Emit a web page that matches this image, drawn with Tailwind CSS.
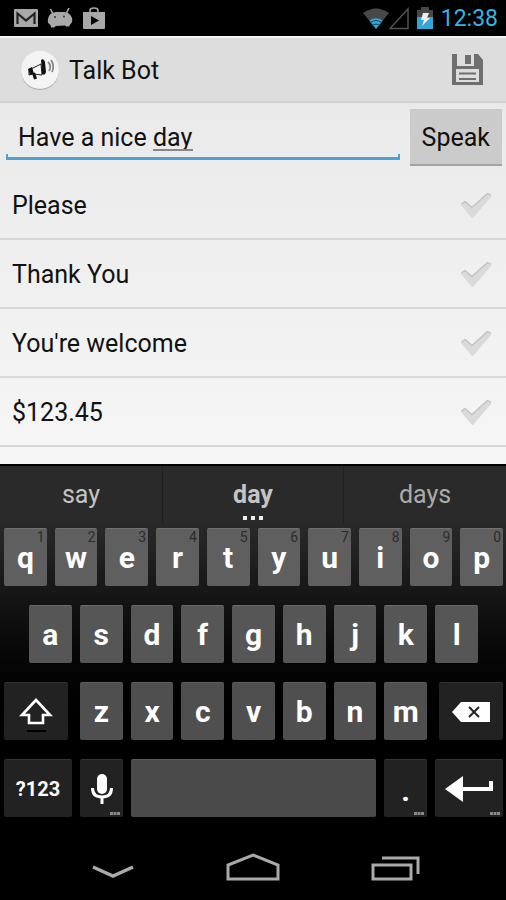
<!DOCTYPE html>
<html lang="en">
<head>
<meta charset="utf-8">
<meta name="viewport" content="width=device-width, initial-scale=1">
<title>Talk Bot</title>
<script src="https://cdn.jsdelivr.net/npm/@tailwindcss/browser@4"></script>
</head>
<body class="flex min-h-screen flex-col bg-black font-['Roboto','Liberation_Sans',sans-serif] text-[25px] leading-8 text-[#111]">

<div class="flex h-9 shrink-0 items-center bg-black pr-2 pl-[14px]">
  <div class="flex flex-1 items-center gap-[9px]">
    <svg class="h-[18px] w-6" viewBox="0 0 24 18"><rect width="24" height="18" rx="1" fill="#a8a8a8"/><path d="M3.500 15V4.500l8.500 7 8.500-7V15" fill="none" stroke="#222" stroke-width="2.200"/></svg>
    <svg class="h-5 w-[26px]" viewBox="0 0 26 20"><path d="M3.500 1l2.500 5M22 0l-2.500 5" stroke="#a8a8a8" stroke-width="1.600"/><path d="M1 11Q2 4.500 9 4h8q6 .5 8 6 1 4-1.500 6L22 18.500h-3l-1-1-9 .5-2 1.500H4L3.500 17Q0 15.500 1 11z" fill="#a8a8a8"/><circle cx="8" cy="9" r="1" fill="#333"/><circle cx="17" cy="8.500" r="1" fill="#333"/></svg>
    <svg class="h-[23px] w-6" viewBox="0 0 24 23"><path d="M8 6V3.500Q8 1 12 1t4 2.500V6" fill="none" stroke="#a8a8a8" stroke-width="1.600"/><path d="M1 5h22v16q0 1-1 1H2q-1 0-1-1z" fill="#a8a8a8"/><path d="M9 9v9l8-4.500z" fill="#000"/></svg>
  </div>
  <div class="flex items-center gap-2">
    <div class="flex items-end">
      <svg class="h-[22px] w-[26px]" viewBox="0 0 26 22"><path d="M0 5Q13-4 26 5L13 21z" fill="#484848"/><path d="M6.500 12.500Q13 8 19.500 12.500L13 21z" fill="#33a6d8"/><path d="M7.500 14.500q5.500-4 11 0M9.500 17.200q3.500-2.400 7 0" fill="none" stroke="#124a63" stroke-width="1"/></svg>
      <svg class="h-[23px] w-5" viewBox="0 0 20 23"><path d="M19 2v19.500H1z" fill="none" stroke="#505050" stroke-width="1.500"/></svg>
    </div>
    <svg class="h-[22px] w-4" viewBox="0 0 16 22"><path d="M4 0h8v3h4v7H0V3h4z" fill="#484848"/><path d="M0 10h16v12H0z" fill="#33a6d8"/><path d="M6 6h6l-2 5h3l-8 8 2-6H4z" fill="#eee"/></svg>
    <time class="pt-[2px] text-[23px] leading-8 text-[#33b5e5]">12:38</time>
  </div>
</div>

<header class="flex h-[67px] shrink-0 items-center border-t-2 border-b-2 border-t-[#f3f3f3] border-b-[#d0d0d0] bg-[#dddddd] pr-[22px] pl-5">
  <svg class="h-10 w-10" viewBox="0 0 40 40"><circle cx="20" cy="21" r="19" fill="#aaa"/><circle cx="20" cy="20" r="19" fill="#f4f4f4"/><path d="M9 20l12-6 1 11-9-1-4 1z" fill="#f8f8f8" stroke="#222" stroke-width="1"/><path d="M8 19l4-2 2 7-4 1zM21 10q3-2 4 2l1 10q-1 4-4 2zM12 23l3-.5 2 6-3 1z" fill="#111"/><path d="M28 12q4 4 1 9M31 10q4 6 1 12" fill="none" stroke="#888" stroke-width="1.800"/></svg>
  <h1 class="flex-1 pt-[2px] pl-[9px]">Talk Bot</h1>
  <button type="button" aria-label="Save" class="block">
    <svg class="h-8 w-8" viewBox="0 0 32 32"><path d="M0 0h5v12h17V0h4l5 6v25H0z" fill="#6f6f6f"/><path d="M13 1h6v9h-6z" fill="#6f6f6f"/><path d="M4 15h23v13H4z" fill="#dddddd"/><path d="M7 19.500h17M7 25h17" stroke="#6f6f6f" stroke-width="2"/></svg>
  </button>
</header>

<main class="flex-1 bg-linear-to-b from-[#eaeaea] to-[#f6f6f6] pb-[17px]">
  <form class="flex items-start gap-[10px] pt-[6px] pr-1 pb-[5px] pl-[6px]">
    <div class="relative flex-1">
      <input type="text" aria-label="Phrase to speak" value="Have a nice day" spellcheck="false" class="block h-[45px] w-full px-3 pt-3 leading-8 outline-none">
      <div class="h-[6px] border-x-2 border-b-[3px] border-[#4ba3d3]"></div>
      <span class="absolute top-10 left-[147px] h-[2px] w-10 bg-[#888]"></span>
    </div>
    <button type="button" class="h-[57px] border-b-2 border-[#a5a5a5] bg-[#cbcbcb] px-3 pt-[2px]">Speak</button>
  </form>
  <ul id="phrases"></ul>
</main>

<section aria-label="Keyboard" class="shrink-0 border-t-2 border-black bg-linear-to-b from-[#2a2a2a] from-15% to-black to-80% pb-[19px] text-white">
  <div class="grid h-[62px] grid-cols-[163fr_181fr_162fr] divide-x divide-[#202020] text-[#c4c4c4]">
    <button type="button" class="h-[58px]">say</button>
    <button type="button" class="relative h-[58px] font-bold">day
      <svg class="absolute bottom-1 left-1/2 h-1 w-5 -translate-x-1/2" viewBox="0 0 20 4"><path d="M0 0h4v4H0zM8 0h4v4H8zM16 0h4v4h-4z" fill="#eee"/></svg>
    </button>
    <button type="button" class="h-[58px] text-[#aaa]">days</button>
  </div>
  <div class="grid gap-[19px] pr-[3px] pl-1 text-[30px] font-bold">
    <div id="row1" class="grid grid-cols-10 gap-2"></div>
    <div id="row2" class="grid grid-cols-9 gap-2 px-[25px]"></div>
    <div class="grid grid-cols-[64fr_347fr_64fr] gap-3">
      <button type="button" aria-label="Shift" class="grid h-[58px] place-items-center rounded-xs border-t border-[#333] bg-[#222]">
        <svg class="h-10 w-9" viewBox="0 0 36 40"><path d="M18 8L4 23h7v8h14v-8h7z" fill="none" stroke="#fff" stroke-width="2.600"/><path d="M9 39h19" stroke="#000" stroke-width="2"/></svg>
      </button>
      <div id="row3" class="grid grid-cols-7 gap-2"></div>
      <button type="button" aria-label="Delete" class="grid h-[58px] place-items-center rounded-xs border-t border-[#333] bg-[#222]">
        <svg class="h-5 w-[38px]" viewBox="0 0 38 20"><path d="M0 10L9 0h29v20H9z" fill="#fff"/><path d="M17 5l10 10M27 5L17 15" stroke="#222" stroke-width="2"/></svg>
      </button>
    </div>
    <div class="grid grid-cols-[68fr_43fr_245fr_43fr_68fr] gap-2">
      <button type="button" class="h-[58px] rounded-xs border-t border-[#333] bg-[#222] text-[20px]">?123</button>
      <button type="button" aria-label="Voice input" class="relative grid h-[58px] place-items-center rounded-xs border-t border-[#333] bg-[#222]">
        <svg class="h-8 w-[22px]" viewBox="0 0 22 32"><rect x="6" y="1" width="10" height="20" rx="5" fill="#fff"/><path d="M1.500 15q0 9 9.500 9t9.500-9M11 24v7" fill="none" stroke="#fff" stroke-width="3"/></svg>
        <svg class="absolute right-[3px] bottom-[2px] h-[3px] w-[10px]" viewBox="0 0 10 3"><path d="M0 0h3v3H0zM3.500 0h3v3h-3zM7 0h3v3H7z" fill="#888"/></svg>
      </button>
      <button type="button" aria-label="Space" class="h-[58px] rounded-xs border-t border-[#5a5a5a] bg-[#4a4a4a]"></button>
      <button type="button" class="relative h-[58px] rounded-xs border-t border-[#333] bg-[#222] pt-1">.
        <svg class="absolute right-[3px] bottom-[2px] h-[3px] w-[10px]" viewBox="0 0 10 3"><path d="M0 0h3v3H0zM3.500 0h3v3h-3zM7 0h3v3H7z" fill="#888"/></svg>
      </button>
      <button type="button" aria-label="Enter" class="relative grid h-[58px] place-items-center rounded-xs border-t border-[#333] bg-[#222]">
        <svg class="h-[26px] w-12" viewBox="0 0 48 26"><path d="M0 13L18 0v11h26V5h4v10H18v11z" fill="#fff"/></svg>
        <svg class="absolute right-[3px] bottom-[2px] h-[3px] w-[10px]" viewBox="0 0 10 3"><path d="M0 0h3v3H0zM3.500 0h3v3h-3zM7 0h3v3H7z" fill="#888"/></svg>
      </button>
    </div>
  </div>
</section>

<nav class="flex h-16 shrink-0 items-center justify-center gap-[86px] bg-black">
  <button type="button" aria-label="Hide keyboard"><svg class="h-8 w-[54px]" viewBox="0 0 54 32"><path d="M7 15l20 9 20-9" fill="none" stroke="#aaa" stroke-width="3.500"/></svg></button>
  <button type="button" aria-label="Home"><svg class="h-8 w-[54px]" viewBox="0 0 54 32"><path d="M2 27V13L27 3l25 10v14z" fill="none" stroke="#aaa" stroke-width="3"/></svg></button>
  <button type="button" aria-label="Recent apps"><svg class="h-8 w-[54px]" viewBox="0 0 54 32"><path d="M7 13h38v14H7zM16 6h36v16" fill="none" stroke="#aaa" stroke-width="3"/></svg></button>
</nav>

<script>
  const phrases = ["Please", "Thank You", "You're welcome", "$123.45"];
  document.getElementById("phrases").innerHTML = phrases.map((text, i) => `
    <li class="border-b-2 border-[#d8d8d8]">
      <label for="phrase-${i}" class="flex h-[67px] items-center justify-between pt-[2px] pr-[14px] pl-3">
        <span>${text}</span>
        <span class="grid h-7 w-8 place-items-center">
          <input id="phrase-${i}" type="checkbox" class="col-start-1 row-start-1 h-7 w-8 appearance-none">
          <svg class="pointer-events-none col-start-1 row-start-1 h-7 w-8" viewBox="0 0 32 28"><path d="M2 12.500L5 10l7 6L28 2l2.500 2L12.500 25z" fill="#dadada" stroke="#dadada" stroke-width="2" stroke-linejoin="round"/><path d="M1.500 12L5 9.500l7 6L27.500 1.500 31 3" fill="none" stroke="#c2c2c2" stroke-width="1.300" stroke-linejoin="round"/></svg>
        </span>
      </label>
    </li>`).join("");

  const keyRow = (id, letters, hints, tone) => {
    document.getElementById(id).innerHTML = [...letters].map((c, i) => `
      <button type="button" class="relative h-[58px] rounded-xs border-t ${tone}">${c}${hints ? `<span class="absolute top-0 right-[2px] text-[14px] leading-4 font-normal text-[#2c2c2c]">${hints[i]}</span>` : ""}</button>`).join("");
  };
  keyRow("row1", "qwertyuiop", "1234567890", "border-[#727272] bg-[#5f5f5f]");
  keyRow("row2", "asdfghjkl", "", "border-[#696969] bg-[#565656]");
  keyRow("row3", "zxcvbnm", "", "border-[#606060] bg-[#4f4f4f]");
</script>
</body>
</html>
